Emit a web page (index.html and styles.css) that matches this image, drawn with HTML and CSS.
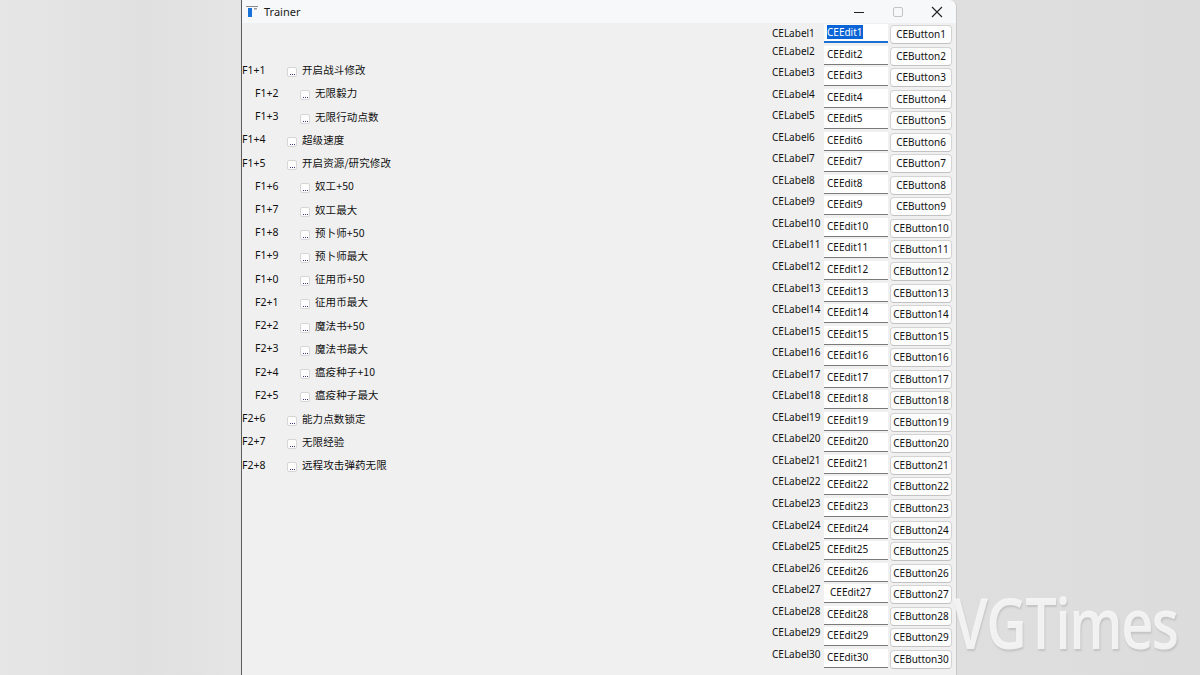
FILE: index.html
```html
<!DOCTYPE html>
<html lang="zh">
<head>
<meta charset="utf-8">
<title>Trainer</title>
<link rel="stylesheet" href="styles.css">
</head>
<body>
<div class="stage">
  <div class="window">
    <div class="titlebar">
      <svg class="appicon" width="14" height="14" viewBox="0 0 14 14">
        <rect x="1" y="1" width="12" height="1" fill="#8a8a8a"/>
        <rect x="3" y="3" width="4" height="9" fill="#1a73d9"/>
        <rect x="9" y="3" width="3" height="1.5" fill="#9a9a9a"/>
      </svg>
      <span class="title">Trainer</span>
      <div class="controls">
        <svg class="ctl" width="12" height="12" viewBox="0 0 12 12"><line x1="1" y1="6.5" x2="11" y2="6.5" stroke="#222" stroke-width="1"/></svg>
        <svg class="ctl" width="12" height="12" viewBox="0 0 12 12"><rect x="1.5" y="1.5" width="9" height="9" rx="1.5" fill="none" stroke="#c4c4c4" stroke-width="1"/></svg>
        <svg class="ctl" width="12" height="12" viewBox="0 0 12 12"><path d="M1 1L11 11M11 1L1 11" stroke="#222" stroke-width="1.1"/></svg>
      </div>
    </div>
    <div class="content">
      <div class="left">
        <div class="item"><span class="key">F1+1</span><span class="box"><i></i><i></i><i></i></span><span class="lbl">开启战斗修改</span></div>
        <div class="item sub"><span class="key">F1+2</span><span class="box"><i></i><i></i><i></i></span><span class="lbl">无限毅力</span></div>
        <div class="item sub"><span class="key">F1+3</span><span class="box"><i></i><i></i><i></i></span><span class="lbl">无限行动点数</span></div>
        <div class="item"><span class="key">F1+4</span><span class="box"><i></i><i></i><i></i></span><span class="lbl">超级速度</span></div>
        <div class="item"><span class="key">F1+5</span><span class="box"><i></i><i></i><i></i></span><span class="lbl">开启资源/研究修改</span></div>
        <div class="item sub"><span class="key">F1+6</span><span class="box"><i></i><i></i><i></i></span><span class="lbl">奴工+50</span></div>
        <div class="item sub"><span class="key">F1+7</span><span class="box"><i></i><i></i><i></i></span><span class="lbl">奴工最大</span></div>
        <div class="item sub"><span class="key">F1+8</span><span class="box"><i></i><i></i><i></i></span><span class="lbl">预卜师+50</span></div>
        <div class="item sub"><span class="key">F1+9</span><span class="box"><i></i><i></i><i></i></span><span class="lbl">预卜师最大</span></div>
        <div class="item sub"><span class="key">F1+0</span><span class="box"><i></i><i></i><i></i></span><span class="lbl">征用币+50</span></div>
        <div class="item sub"><span class="key">F2+1</span><span class="box"><i></i><i></i><i></i></span><span class="lbl">征用币最大</span></div>
        <div class="item sub"><span class="key">F2+2</span><span class="box"><i></i><i></i><i></i></span><span class="lbl">魔法书+50</span></div>
        <div class="item sub"><span class="key">F2+3</span><span class="box"><i></i><i></i><i></i></span><span class="lbl">魔法书最大</span></div>
        <div class="item sub"><span class="key">F2+4</span><span class="box"><i></i><i></i><i></i></span><span class="lbl">瘟疫种子+10</span></div>
        <div class="item sub"><span class="key">F2+5</span><span class="box"><i></i><i></i><i></i></span><span class="lbl">瘟疫种子最大</span></div>
        <div class="item"><span class="key">F2+6</span><span class="box"><i></i><i></i><i></i></span><span class="lbl">能力点数锁定</span></div>
        <div class="item"><span class="key">F2+7</span><span class="box"><i></i><i></i><i></i></span><span class="lbl">无限经验</span></div>
        <div class="item"><span class="key">F2+8</span><span class="box"><i></i><i></i><i></i></span><span class="lbl">远程攻击弹药无限</span></div>
      </div>
      <div class="right" id="right"></div>
    </div>
  </div>
  <div class="watermark">VGTimes</div>
</div>
<script src="app.js"></script>
</body>
</html>
```
FILE: app.js
```js
(function () {
  var right = document.getElementById('right');
  var html = '';
  for (var i = 1; i <= 30; i++) {
    var lc = 'celabel' + (i === 1 ? ' first' : '');
    var ec = 'ceedit' + (i === 1 ? ' focus' : '') + (i === 27 ? ' shifted' : '');
    var et = i === 1 ? '<span class="sel">CEEdit1</span>' : 'CEEdit' + i;
    html += '<div class="' + lc + '">CELabel' + i + '</div>' +
            '<div class="' + ec + '">' + et + '</div>' +
            '<div class="cebtn">CEButton' + i + '</div>';
  }
  right.innerHTML = html;
})();
```
FILE: styles.css
```css
html, body {
  margin: 0;
  padding: 0;
}
body {
  width: 1200px;
  height: 675px;
  overflow: hidden;
  background: linear-gradient(90deg, #e6e6e6 0%, #e0e0e0 12%, #e5e5e5 20%, #e1e1e1 60%, #dcdcdc 100%);
  font-family: "Noto Sans", "Noto Sans CJK SC", sans-serif;
  color: #111;
}
.stage {
  position: relative;
  width: 1200px;
  height: 675px;
  display: flex;
  padding-left: 241px;
  box-sizing: border-box;
}
.window {
  width: 716px;
  height: 700px;
  background: #f0f0f0;
  border-left: 1px solid #5c5c5c;
  border-right: 1px solid #c8c8c8;
  border-top-right-radius: 7px;
  box-sizing: border-box;
  display: flex;
  flex-direction: column;
}
.titlebar {
  height: 23px;
  flex: none;
  display: flex;
  align-items: center;
  background: #f7f8fa;
  border-top-right-radius: 7px;
  padding-left: 3px;
}
.appicon {
  flex: none;
}
.title {
  margin-left: 5px;
  font-size: 11px;
  font-family: "Noto Sans", sans-serif;
  color: #1a1a1a;
}
.controls {
  margin-left: auto;
  display: flex;
  gap: 27px;
  padding-right: 13px;
}
.ctl {
  display: block;
}
.content {
  flex: 1;
  display: flex;
  justify-content: space-between;
}
.left {
  padding-top: 35px;
  display: flex;
  flex-direction: column;
}
.item {
  height: 23.24px;
  display: flex;
  align-items: center;
  font-size: 10.5px;
  white-space: nowrap;
}
.item.sub {
  padding-left: 13px;
}
.key {
  width: 45px;
  flex: none;
  font-family: "Noto Sans", sans-serif;
  font-size: 10.5px;
}
.box {
  width: 10px;
  height: 10px;
  flex: none;
  margin-top: 5px;
  margin-right: 5px;
  background: #fdfdfd;
  border: 1px solid #d6d6d6;
  border-radius: 2px;
  box-sizing: border-box;
  display: flex;
  align-items: flex-end;
  justify-content: center;
  gap: 1px;
  padding-bottom: 1px;
}
.box i {
  display: block;
  width: 1px;
  height: 1px;
  background: #3a3a7a;
}
.lbl {
  font-family: "Noto Sans CJK SC", sans-serif;
  font-size: 10.5px;
  letter-spacing: 0.1px;
  color: #111;
}
.right {
  display: grid;
  grid-template-columns: 52px 66px 62px;
  grid-auto-rows: 21.55px;
  padding-right: 4px;
  font-family: "Noto Sans", sans-serif;
  font-size: 10px;
}
.celabel {
  align-self: start;
  margin-top: -1px;
  line-height: 14px;
  white-space: nowrap;
}
.celabel.first {
  margin-top: 0;
  padding-top: 3px;
}
.ceedit {
  margin-top: 1px;
  height: 19px;
  width: 64px;
  background: #ffffff;
  border-bottom: 1px solid #7a7a7a;
  box-sizing: border-box;
  padding-left: 3px;
  line-height: 17px;
  white-space: nowrap;
}
.ceedit.shifted {
  padding-left: 6px;
}
.ceedit.focus {
  border-bottom: 2px solid #1a6fd1;
}
.sel {
  background: #0a64d6;
  color: #fff;
}
.cebtn {
  margin-top: 2px;
  height: 19px;
  width: 62px;
  background: #fdfdfd;
  border: 1px solid #d3d3d3;
  border-bottom-color: #c2c2c2;
  border-radius: 4px;
  box-sizing: border-box;
  text-align: center;
  line-height: 17px;
  white-space: nowrap;
}
.watermark {
  position: absolute;
  left: 953px;
  top: 582px;
  font-family: "Open Sans", "Noto Sans", sans-serif;
  font-size: 70px;
  font-weight: 600;
  letter-spacing: -2px;
  color: rgba(246, 246, 246, 0.9);
  text-shadow: 1px 2px 2px rgba(150, 150, 150, 0.35);
  line-height: 80px;
  transform: scaleX(0.8);
  transform-origin: left top;
}
```
